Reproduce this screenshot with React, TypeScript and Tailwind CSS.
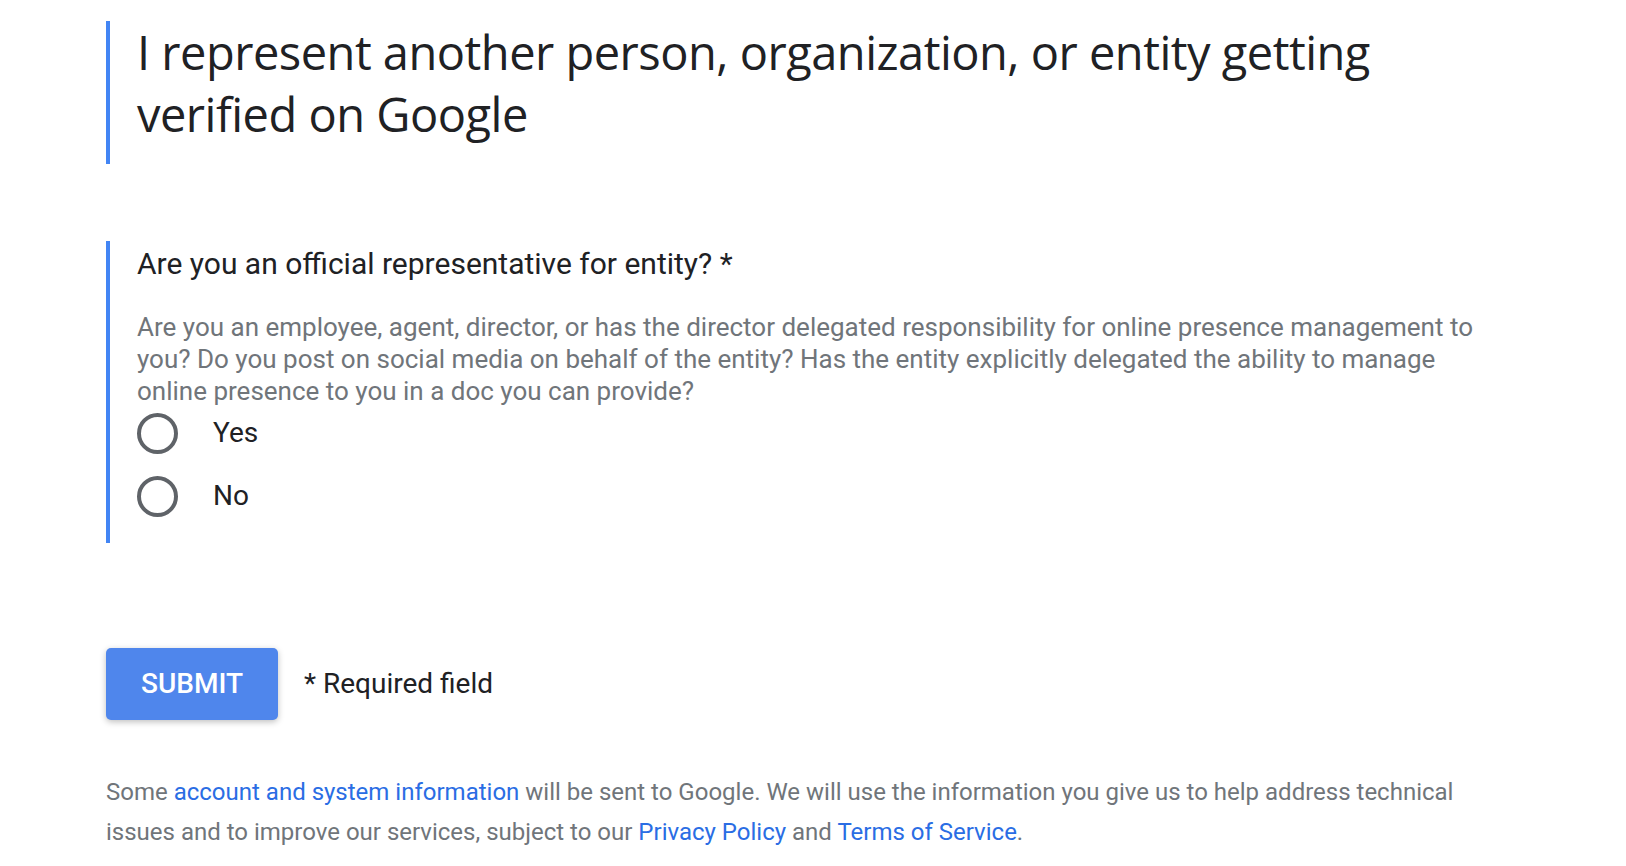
import { useState } from 'react';

const RadioOption: React.FC<{ label: string; checked: boolean; onSelect: () => void }> = ({
  label,
  checked,
  onSelect
}) => (
  <label className="flex items-center h-[52px] cursor-pointer" onClick={onSelect}>
    <span className="w-[41px] h-[41px] rounded-full border-[4px] border-[#5f6368] flex items-center justify-center shrink-0">
      {checked && <span className="w-[19px] h-[19px] rounded-full bg-[#4285f4]" />}
    </span>
    <span className="ml-[35px] text-[28px] text-[#202124]">{label}</span>
  </label>
);

const App: React.FC = () => {
  const [answer, setAnswer] = useState<string | null>(null);

  return (
    <div className="min-h-[866px] bg-white pl-[106px] pr-[120px] pt-[21px] font-['Roboto',sans-serif]">
      {/* Page heading */}
      <div className="border-l-[4px] border-[#4285f4] pl-[27px] pb-[19px]">
        <h1 className="font-['Open_Sans',sans-serif] text-[47px] leading-[62px] text-[#202124] tracking-[-0.5px]">
          I represent another person, organization, or entity getting
          <br />
          verified on Google
        </h1>
      </div>

      {/* Question */}
      <div className="mt-[77px] border-l-[4px] border-[#4285f4] pl-[27px] pt-[5px] pb-[21px]">
        <h2 className="text-[30px] leading-[36px] text-[#202124]">
          Are you an official representative for entity? *
        </h2>
        <p className="mt-[29px] text-[26px] leading-[32px] text-[#70757a]">
          Are you an employee, agent, director, or has the director delegated responsibility for online presence management to
          <br />
          you? Do you post on social media on behalf of the entity? Has the entity explicitly delegated the ability to manage
          <br />
          online presence to you in a doc you can provide?
        </p>
        <div className="flex flex-col gap-[11px]">
          <RadioOption label="Yes" checked={answer === 'yes'} onSelect={() => setAnswer('yes')} />
          <RadioOption label="No" checked={answer === 'no'} onSelect={() => setAnswer('no')} />
        </div>
      </div>

      {/* Actions */}
      <div className="mt-[105px] flex items-center">
        <button
          type="button"
          className="w-[172px] h-[72px] rounded-[5px] bg-[#4f86ec] text-white text-[28px] font-medium shadow-[0_2px_6px_rgba(0,0,0,0.25)]"
        >
          SUBMIT
        </button>
        <span className="ml-[26px] text-[28px] text-[#202124]">* Required field</span>
      </div>

      {/* Footer */}
      <p className="mt-[52px] text-[24px] leading-[40px] text-[#70757a] max-w-[1380px]">
        Some <a href="#" className="text-[#2a6de4]">account and system information</a> will be sent to Google. We will use the
        information you give us to help address technical issues and to improve our services, subject to our{' '}
        <a href="#" className="text-[#2a6de4]">Privacy Policy</a> and{' '}
        <a href="#" className="text-[#2a6de4]">Terms of Service</a>.
      </p>
    </div>
  );
};

export default App;
